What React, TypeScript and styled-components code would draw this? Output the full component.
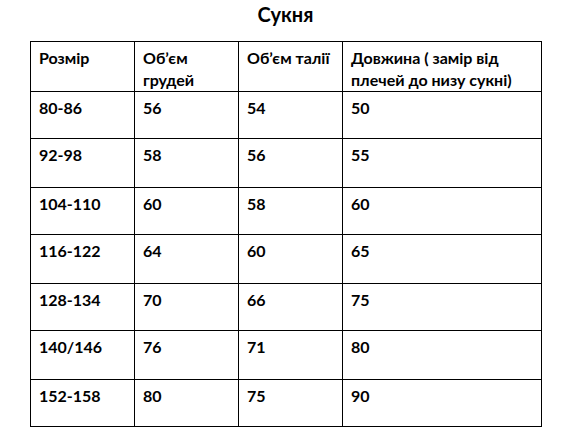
import React from 'react';
import styled, { createGlobalStyle } from 'styled-components';

const GlobalStyle = createGlobalStyle`
  html, body {
    margin: 0;
    padding: 0;
    background: #fff;
  }
  body {
    font-family: Lato, Carlito, "Open Sans", "Liberation Sans", sans-serif;
    color: #000;
  }
`;

const Page = styled.div`
  width: 567px;
  height: 444px;
  padding: 0 0 0 30px;
  box-sizing: border-box;
`;

const Title = styled.h1`
  width: 511px;
  margin: 0;
  height: 41px;
  padding-top: 2px;
  box-sizing: border-box;
  text-align: center;
  font-size: 20px;
  font-weight: 700;
  line-height: 24px;
`;

const Table = styled.table`
  width: 511px;
  border-collapse: collapse;
  table-layout: fixed;
  font-size: 16px;
  font-weight: 700;
`;

const Cell = styled.td<{ $width?: number }>`
  box-sizing: border-box;
  border: 1.5px solid #000;
  vertical-align: top;
  padding: 5px 3px 0 8px;
  line-height: 22px;
  ${({ $width }) => ($width ? `width: ${$width}px;` : '')}
`;

const Row = styled.tr<{ $height: number }>`
  height: ${({ $height }) => $height}px;
`;

const headers = ['Розмір', 'Об’єм грудей', 'Об’єм талії', 'Довжина ( замір від плечей до низу сукні)'];
const widths = [104, 104, 104, 199];

const rows = [
  ['80-86', '56', '54', '50'],
  ['92-98', '58', '56', '55'],
  ['104-110', '60', '58', '60'],
  ['116-122', '64', '60', '65'],
  ['128-134', '70', '66', '75'],
  ['140/146', '76', '71', '80'],
  ['152-158', '80', '75', '90'],
];

export default function App() {
  return (
    <Page>
      <GlobalStyle />
      <Title>Сукня</Title>
      <Table>
        <tbody>
          <Row $height={50}>
            {headers.map((h, i) => (
              <Cell key={i} $width={widths[i]}>{h}</Cell>
            ))}
          </Row>
          {rows.map((r, ri) => (
            <Row key={ri} $height={ri % 2 === 0 ? 47 : 49}>
              {r.map((c, ci) => (
                <Cell key={ci}>{c}</Cell>
              ))}
            </Row>
          ))}
        </tbody>
      </Table>
    </Page>
  );
}
